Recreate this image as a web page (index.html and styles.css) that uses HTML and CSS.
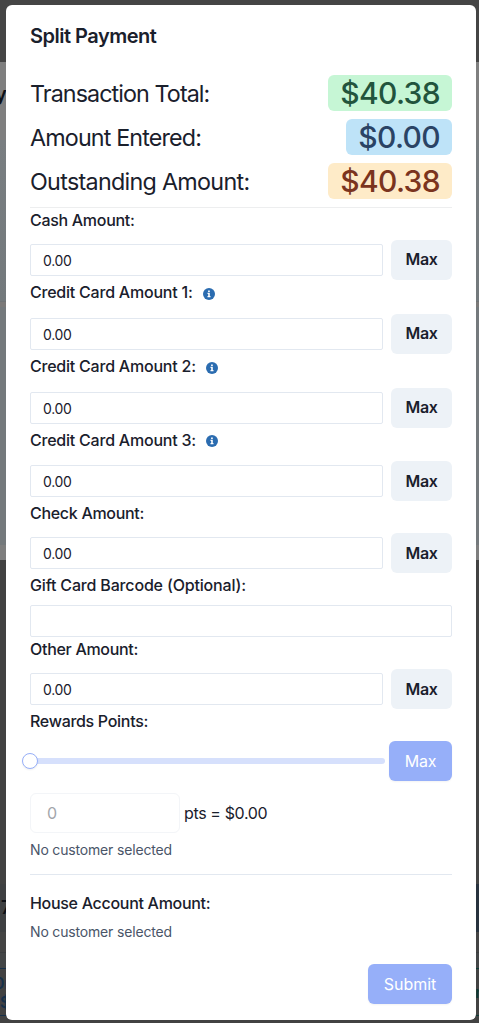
FILE: index.html
```
<!DOCTYPE html>
<html lang="en">
<head>
<meta charset="utf-8">
<title>Split Payment</title>
<link rel="stylesheet" href="styles.css">
</head>
<body>
<div class="page" aria-hidden="true">
  <div class="band band-nav"></div>
  <div class="band band-title"><span class="peek peek-title">y</span></div>
  <div class="band band-card"></div>
  <div class="band band-gap"></div>
  <div class="band band-list"></div>
  <div class="band band-light"></div>
  <div class="band band-empty"></div>
  <div class="band band-total"><span class="peek peek-total">7</span><i class="blue-cell"></i></div>
  <div class="band band-space"></div>
  <div class="band band-actions"><div class="action action-left">0r<br>$4</div><div class="action action-right">n</div></div>
</div>
<main class="modal">
  <h1 class="title"><span>Split Payment</span></h1>
  <section class="totals">
    <div class="total"><span class="caption t1">Transaction Total:</span><b class="badge green">$40.38</b></div>
    <div class="total"><span class="caption t2">Amount Entered:</span><b class="badge blue">$0.00</b></div>
    <div class="total"><span class="caption t3">Outstanding Amount:</span><b class="badge orange">$40.38</b></div>
  </section>
  <form class="form">
    <label class="label">Cash Amount:</label>
    <div class="row"><input class="input" value="0.00"><button class="max max-high" type="button">Max</button></div>
    <label class="label label-card">Credit Card Amount 1: <svg class="info" viewBox="0 0 12 12"><circle cx="6" cy="6" r="6"/><path d="M5.1 2.4h1.7v1.5H5.1zM4.5 4.8h2.3v3.3h.7v1.1h-3V8.1h.7V5.9h-.7z"/></svg></label>
    <div class="row row-card"><input class="input" value="0.00"><button class="max max-high" type="button">Max</button></div>
    <label class="label label-card">Credit Card Amount 2: <svg class="info" viewBox="0 0 12 12"><circle cx="6" cy="6" r="6"/><path d="M5.1 2.4h1.7v1.5H5.1zM4.5 4.8h2.3v3.3h.7v1.1h-3V8.1h.7V5.9h-.7z"/></svg></label>
    <div class="row row-card"><input class="input" value="0.00"><button class="max max-high" type="button">Max</button></div>
    <label class="label label-card">Credit Card Amount 3: <svg class="info info-last" viewBox="0 0 12 12"><circle cx="6" cy="6" r="6"/><path d="M5.1 2.4h1.7v1.5H5.1zM4.5 4.8h2.3v3.3h.7v1.1h-3V8.1h.7V5.9h-.7z"/></svg></label>
    <div class="row row-last-card"><input class="input input-low" value="0.00"><button class="max" type="button">Max</button></div>
    <label class="label">Check Amount:</label>
    <div class="row"><input class="input" value="0.00"><button class="max" type="button">Max</button></div>
    <label class="label label-gift">Gift Card Barcode (Optional):</label>
    <div class="row"><input class="input"></div>
    <label class="label">Other Amount:</label>
    <div class="row"><input class="input" value="0.00"><button class="max" type="button">Max</button></div>
    <label class="label">Rewards Points:</label>
    <div class="row row-slider"><div class="track"><i class="thumb"></i></div><button class="primary primary-max" type="button">Max</button></div>
    <div class="points"><input class="points-input" value="0" disabled><span class="pts">pts = $0.00</span></div>
    <p class="note">No customer selected</p>
    <hr class="rule">
    <label class="label">House Account Amount:</label>
    <p class="note note-house">No customer selected</p>
    <div class="footer"><button class="primary submit" type="button">Submit</button></div>
  </form>
</main>
</body>
</html>
```
FILE: styles.css
```
* { box-sizing: border-box; }
body {
  margin: 0;
  height: 1023px;
  overflow: hidden;
  position: relative;
  background: #424242;
  color: #1a202c;
  font: 16px/24px Inter, "Liberation Sans", sans-serif;
}
input, button { font: inherit; color: inherit; margin: 0; }

/* dimmed page behind the dialog */
.page { position: absolute; inset: 0; display: flex; flex-direction: column; overflow: hidden; }
.band { position: relative; flex: none; }
.band-nav { height: 62px; background: #454545; }
.band-title { height: 78px; background: #7f7f7f; }
.band-card { height: 161px; background: linear-gradient(#797e81, #73797c); }
.band-gap { height: 6px; background: #7b7978; border-top: 1px solid #6f7375; }
.band-list { height: 238px; background: #74797c; }
.band-light { height: 15px; background: #7e7e7e; }
.band-empty { height: 324px; background: #424242; }
.band-total { height: 48px; background: #3e4042; }
.band-space { height: 36px; background: linear-gradient(#444 20px, #3b3d3f 20px, #3b3d3f 21px, #434546 21px); }
.band-actions { height: 48px; display: flex; justify-content: space-between; }
.blue-cell { position: absolute; right: 0; top: 0; width: 3px; height: 48px; background: #28323e; }
.peek { position: absolute; font-weight: 600; color: #0d1016; }
.peek-title { left: -5px; top: 20px; font-size: 20px; }
.peek-total { left: 1px; top: 12px; font-size: 18px; }
.action { height: 48px; padding-top: 5px; font-weight: 600; line-height: 19px; white-space: nowrap; overflow: hidden; }
.action-left { width: 20px; margin-left: 0; text-indent: -6px; color: #16304a; border: solid #16304a; border-width: 1px 0; }
.action-right { width: 3px; padding-top: 14px; text-indent: -1px; color: #0d3a34; border: solid #0d3a34; border-width: 1px 0; }

.modal {
  position: relative;
  width: 470px;
  height: 1015px;
  margin: 5px 0 0 6px;
  padding: 16px 24px;
  background: #fff;
  border-radius: 6px;
}
.title { margin: 0; font-size: 20px; line-height: 30px; font-weight: 600; letter-spacing: -.5px; }
.totals { margin-top: 20px; padding: 4px 0 8px; border-bottom: 1px solid #edeeef; display: grid; gap: 8px; }
.total { display: flex; align-items: center; justify-content: space-between; height: 36px; }
.caption { padding-top: 2px; font-size: 23.3px; }
.t1 { letter-spacing: -.92px; }
.t2 { letter-spacing: -.85px; }
.t3 { letter-spacing: -.7px; }
.badge { height: 36px; line-height: 37px; padding: 0 12px; border-radius: 6px; font-size: 30px; font-weight: 500; letter-spacing: -.66px; }
.green { background: #c6f6d5; color: #22543d; }
.blue { background: #bee3f8; color: #2a4365; }
.orange { background: #feebc8; color: #7b341e; }

.label { display: flex; align-items: center; height: 24px; font-weight: 500; letter-spacing: -.3px; white-space: nowrap; }
.label-card { letter-spacing: -.22px; }
.label-gift { letter-spacing: -.17px; }
.row { display: flex; align-items: center; gap: 8px; margin-top: 8px; }
.row-card { margin-top: 10px; }
.row-last-card { margin-top: 9px; }
.info { width: 12px; height: 12px; margin: 3px 0 0 10px; fill: #2b6cb0; }
.info-last { margin-top: 2px; }
.info path { fill: #fff; }
.input { flex: 1; min-width: 0; height: 32px; padding: 0 12px; border: 1px solid #e2e8f0; border-radius: 2px; background: #fff; font-size: 14px; letter-spacing: -.35px; outline: 0; }
.input-low { padding-top: 1px; }
.max { width: 61px; height: 40px; padding: 0; border: 0; border-radius: 6px; background: #edf2f7; font-weight: 600; letter-spacing: -.3px; }
.max-high { padding-bottom: 2px; }
.row-slider { gap: 4px; }
.track { position: relative; flex: 1; height: 6px; border-radius: 3px; background: #d6e0fc; }
.thumb { position: absolute; left: -8px; top: -5px; width: 16px; height: 16px; border: 1px solid #96aff9; border-radius: 50%; background: #fff; box-shadow: 0 1px 2px #0001; }
.primary { height: 40px; padding: 0; border: 0; border-radius: 6px; background: #96aff9; color: #fff; box-shadow: 0 1px 2px #0000000d; }
.primary-max { width: 63px; letter-spacing: -.2px; }
.points { display: flex; align-items: center; gap: 4px; margin-top: 12px; }
.points-input { width: 150px; height: 40px; padding: 0 16px; border: 1px solid #f3f5f8; border-radius: 6px; background: #fff; color: #a3a6ab; }
.pts { letter-spacing: -.37px; }
.note { margin: 6px 0 0; font-size: 14px; line-height: 21px; letter-spacing: -.17px; color: #4a5568; }
.rule { height: 1px; margin: 14px 0 16px; border: 0; background: #e2e8f0; }
.note-house { margin-top: 6px; }
.footer { display: flex; justify-content: flex-end; margin-top: 22px; }
.submit { width: 84px; }
```
